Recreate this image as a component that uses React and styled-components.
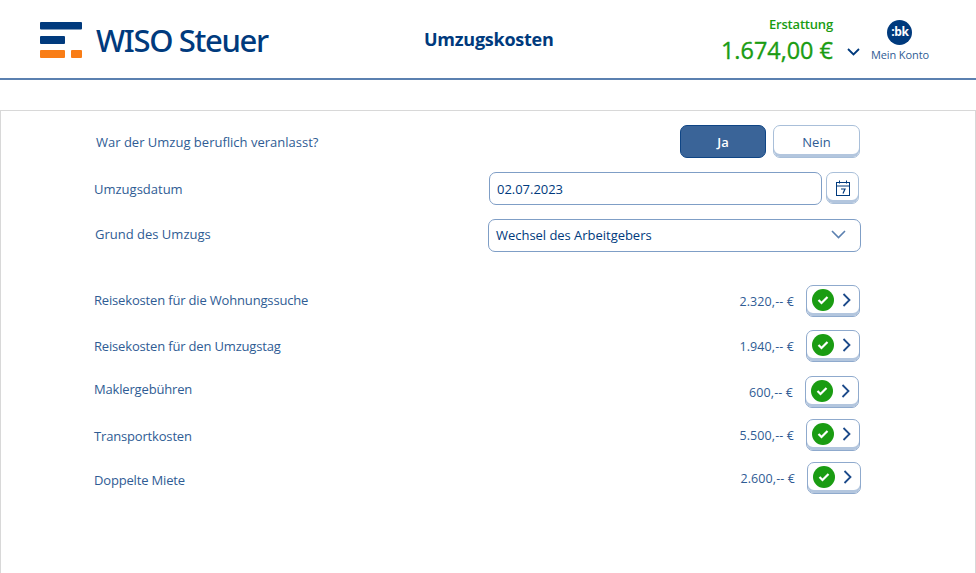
import React from "react";
import styled, { createGlobalStyle } from "styled-components";

const blue = "#003a7d";
const text = "#2f5c94";
const green = "#1a9c12";

const Global = createGlobalStyle`
  html, body {
    margin: 0;
    padding: 0;
    background: #fff;
    font-family: "Open Sans", "Noto Sans", sans-serif;
    overflow: hidden;
  }
`;

const Page = styled.div`
  width: 976px;
  height: 573px;
  overflow: hidden;
`;

const Header = styled.header`
  height: 78px;
  border-bottom: 2px solid #5b80b0;
  display: grid;
  grid-template-columns: 424px 1fr auto;
  align-items: center;
`;

const Brand = styled.div`
  display: flex;
  align-items: center;
  padding-left: 40px;
  gap: 14px;
`;

const LogoMark = styled.svg`
  display: block;
  margin-top: 1px;
`;

const BrandName = styled.span`
  font-family: "Noto Sans", sans-serif;
  font-size: 31px;
  font-weight: 500;
  line-height: 36px;
  letter-spacing: -1.35px;
  color: ${blue};
  margin-top: 1px;
`;

const Title = styled.h1`
  margin: 0;
  font-size: 18px;
  font-weight: 700;
  letter-spacing: -0.25px;
  color: ${blue};
`;

const Account = styled.div`
  display: flex;
  align-items: flex-start;
  padding-right: 47px;
  margin-top: 4px;
`;

const Refund = styled.div`
  display: flex;
  flex-direction: column;
  align-items: flex-end;
  color: ${green};
`;

const RefundLabel = styled.span`
  font-size: 13px;
  font-weight: 600;
  line-height: 18px;
  letter-spacing: -0.2px;
  margin-top: -2px;
`;

const RefundValue = styled.span`
  font-size: 23.4px;
  font-weight: 500;
  line-height: 31px;
  margin-top: 2px;
  -webkit-text-stroke: 0.35px ${green};
`;

const Chevron = styled.svg`
  display: block;
  margin: 31px 0 0 14px;
`;

const Me = styled.div`
  display: flex;
  flex-direction: column;
  align-items: center;
  margin: 3px 0 0 11px;
`;

const Avatar = styled.div`
  width: 25px;
  height: 25px;
  border-radius: 50%;
  background: ${blue};
  color: #fff;
  font-size: 12px;
  font-weight: 700;
  line-height: 24px;
  text-align: center;
  letter-spacing: -0.3px;
`;

const MeLabel = styled.span`
  font-size: 11px;
  line-height: 15px;
  margin-top: 2px;
  letter-spacing: -0.1px;
  color: ${text};
`;

const Panel = styled.main`
  margin-top: 30px;
  height: 480px;
  border: 1px solid #d8d8d8;
  display: flex;
  flex-direction: column;
  box-sizing: border-box;
  padding: 14px 115px 0 0;
`;

const Row = styled.div`
  display: flex;
  align-items: center;
  justify-content: space-between;
  height: 33px;
  margin-top: ${(p) => p.$top || 0}px;
  padding-left: ${(p) => p.$left || 93}px;
  margin-right: ${(p) => p.$right || 0}px;
`;

const Label = styled.span`
  font-size: 13px;
  letter-spacing: ${(p) => (p.$wide ? "0" : "-0.17px")};
  color: ${text};
  position: relative;
  top: ${(p) => p.$shift || 0}px;
`;

const Toggle = styled.div`
  display: flex;
  gap: 7px;
`;

const Choice = styled.button`
  width: ${(p) => (p.$active ? 86 : 87)}px;
  height: 33px;
  box-sizing: border-box;
  padding: 0;
  border-radius: 7px;
  font-family: inherit;
  font-size: 13px;
  font-weight: ${(p) => (p.$active ? 600 : 400)};
  color: ${(p) => (p.$active ? "#fff" : text)};
  background: ${(p) => (p.$active ? "#3a6498" : "#fff")};
  border: 1px solid ${(p) => (p.$active ? "#0f4585" : "#a9bfd9")};
  box-shadow: ${(p) => (p.$active ? "none" : "inset 0 -3px 0 #b3c6de")};
`;

const Controls = styled.div`
  display: flex;
  gap: 4px;
  width: ${(p) => p.$width}px;
`;

const Field = styled.div`
  flex: 1;
  height: 33px;
  box-sizing: border-box;
  display: flex;
  align-items: center;
  justify-content: space-between;
  padding: 0 ${(p) => p.$pad || 8}px ${(p) => (p.$select ? 2 : 0)}px 7px;
  border: 1px solid #7f9ec6;
  border-radius: 7px;
  font-size: 13px;
  letter-spacing: -0.03px;
  color: ${blue};
  background: #fff;
`;

const IconButton = styled.button`
  width: 33px;
  height: 32px;
  box-sizing: border-box;
  padding: 0;
  border: 1px solid #a9bfd9;
  border-radius: 7px;
  background: #fff;
  box-shadow: inset 0 -3px 0 #b3c6de;
  display: flex;
  align-items: center;
  justify-content: center;
`;

const Amount = styled.div`
  display: flex;
  align-items: center;
  gap: 12px;
  font-size: 12.5px;
  letter-spacing: 0.1px;
  color: ${text};
`;

const AmountValue = styled.span`
  margin-top: 2px;
`;

const Open = styled.button`
  width: 54px;
  height: 32px;
  box-sizing: border-box;
  padding: 0 8px 2px 5px;
  border: 1px solid #8faacd;
  border-radius: 7px;
  background: #fff;
  box-shadow: inset 0 -3px 0 #b3c6de;
  display: flex;
  align-items: center;
  justify-content: space-between;
`;

const Check = styled.span`
  width: 22px;
  height: 22px;
  border-radius: 50%;
  background: ${green};
  display: flex;
  align-items: center;
  justify-content: center;
`;

const Logo = () => (
  <LogoMark width="42" height="36" viewBox="0 0 42 36">
    <rect y="0" width="42" height="7.5" rx="1" fill={blue} />
    <rect y="14" width="25" height="8" rx="1" fill={blue} />
    <rect y="28" width="25" height="8" rx="1" fill="#f97d16" />
    <rect x="31" y="28" width="11" height="8" rx="1" fill="#f97d16" />
  </LogoMark>
);

const CalendarIcon = () => (
  <svg width="14" height="16" viewBox="0 0 14 16" fill="none" stroke={blue}>
    <path d="M3.5 0.5v3M10.5 0.5v3" />
    <rect x="0.5" y="2.5" width="13" height="13" />
    <path d="M0.5 6h13" />
    <path d="M5 9h4l-2 4.5" strokeWidth="1.2" />
  </svg>
);

const rows = [
  { name: "Reisekosten für die Wohnungssuche", value: "2.320,-- €", top: 32, shift: -1 },
  { name: "Reisekosten für den Umzugstag", value: "1.940,-- €", top: 12, shift: 0 },
  { name: "Maklergebühren", value: "600,-- €", top: 13, shift: -3, right: 1 },
  { name: "Transportkosten", value: "5.500,-- €", top: 10, shift: 1 },
  { name: "Doppelte Miete", value: "2.600,-- €", top: 10, shift: 2, right: -1 },
];

export default function App() {
  return (
    <Page>
      <Global />
      <Header>
        <Brand>
          <Logo />
          <BrandName>WISO Steuer</BrandName>
        </Brand>
        <Title>Umzugskosten</Title>
        <Account>
          <Refund>
            <RefundLabel>Erstattung</RefundLabel>
            <RefundValue>1.674,00 €</RefundValue>
          </Refund>
          <Chevron width="13" height="8" viewBox="0 0 13 8" fill="none" stroke={blue} strokeWidth="1.8">
            <path d="M1 1l5.5 5.5L12 1" />
          </Chevron>
          <Me>
            <Avatar>:bk</Avatar>
            <MeLabel>Mein Konto</MeLabel>
          </Me>
        </Account>
      </Header>
      <Panel>
        <Row $left={95}>
          <Label $wide>War der Umzug beruflich veranlasst?</Label>
          <Toggle>
            <Choice $active>Ja</Choice>
            <Choice>Nein</Choice>
          </Toggle>
        </Row>
        <Row $top={14} $right={1}>
          <Label $wide>Umzugsdatum</Label>
          <Controls $width={370}>
            <Field>02.07.2023</Field>
            <IconButton>
              <CalendarIcon />
            </IconButton>
          </Controls>
        </Row>
        <Row $top={14} $left={94} $right={-1}>
          <Label $wide $shift={-2}>Grund des Umzugs</Label>
          <Controls $width={373}>
            <Field $pad={14} $select>
              <span>Wechsel des Arbeitgebers</span>
              <svg width="15" height="9" viewBox="0 0 15 9" fill="none" stroke="#5b80b0" strokeWidth="1.6">
                <path d="M1 1l6.5 6.5L14 1" />
              </svg>
            </Field>
          </Controls>
        </Row>
        {rows.map((r) => (
          <Row key={r.name} $top={r.top} $right={r.right}>
            <Label $shift={r.shift}>{r.name}</Label>
            <Amount>
              <AmountValue>{r.value}</AmountValue>
              <Open>
                <Check>
                  <svg width="12" height="10" viewBox="0 0 12 10" fill="none" stroke="#fff" strokeWidth="2.2">
                    <path d="M1.5 5l3 3L10.5 2" />
                  </svg>
                </Check>
                <svg width="9" height="14" viewBox="0 0 9 14" fill="none" stroke="#1c4a8a" strokeWidth="1.8">
                  <path d="M1.5 1l6 6-6 6" />
                </svg>
              </Open>
            </Amount>
          </Row>
        ))}
      </Panel>
    </Page>
  );
}
